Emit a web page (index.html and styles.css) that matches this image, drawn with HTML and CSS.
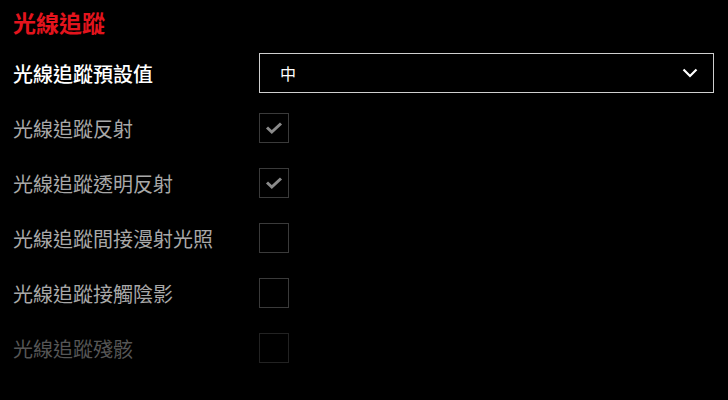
FILE: index.html
```html
<!DOCTYPE html>
<html lang="zh-Hant">
<head>
<meta charset="utf-8">
<link rel="stylesheet" href="styles.css">
</head>
<body>
<div class="panel">
  <h1 class="title">光線追蹤</h1>
  <div class="row">
    <div class="label label-main">光線追蹤預設值</div>
    <div class="select">
      <span class="select-value">中</span>
      <svg class="chevron" width="16" height="10" viewBox="0 0 16 10"><path d="M1.5 1.5 L8 8 L14.5 1.5" fill="none" stroke="#fff" stroke-width="2.2"/></svg>
    </div>
  </div>
  <div class="row">
    <div class="label">光線追蹤反射</div>
    <div class="checkbox"><svg width="18" height="14" viewBox="0 0 18 14"><path d="M2 6.5 L6.8 11 L16 2.5" fill="none" stroke="#8a8a8a" stroke-width="3"/></svg></div>
  </div>
  <div class="row">
    <div class="label">光線追蹤透明反射</div>
    <div class="checkbox"><svg width="18" height="14" viewBox="0 0 18 14"><path d="M2 6.5 L6.8 11 L16 2.5" fill="none" stroke="#8a8a8a" stroke-width="3"/></svg></div>
  </div>
  <div class="row">
    <div class="label">光線追蹤間接漫射光照</div>
    <div class="checkbox"></div>
  </div>
  <div class="row">
    <div class="label">光線追蹤接觸陰影</div>
    <div class="checkbox"></div>
  </div>
  <div class="row">
    <div class="label label-disabled">光線追蹤殘骸</div>
    <div class="checkbox checkbox-disabled"></div>
  </div>
</div>
</body>
</html>
```
FILE: styles.css
```css
html, body {
  margin: 0;
  padding: 0;
  background: #000;
  width: 728px;
  height: 400px;
  overflow: hidden;
}
.panel {
  padding: 0 14px 0 13px;
  font-family: "Noto Sans CJK TC", "Noto Sans", sans-serif;
}
.title {
  margin: 0;
  height: 45px;
  line-height: 45px;
  font-size: 23px;
  font-weight: 700;
  color: #e3141d;
}
.row {
  height: 55px;
  display: grid;
  grid-template-columns: 246px 1fr;
  align-items: center;
}
.label {
  font-size: 20px;
  line-height: 24px;
  padding-top: 3px;
  color: #a8a8a8;
  white-space: nowrap;
}
.label-main {
  color: #fff;
  font-weight: 500;
}
.label-disabled {
  color: #555;
}
.select {
  height: 38px;
  border: 1px solid #cfcfcf;
  display: flex;
  align-items: center;
  justify-content: space-between;
  padding: 0 15px 0 20px;
}
.select-value {
  color: #fff;
  font-size: 16px;
}
.chevron {
  display: block;
}
.checkbox {
  width: 28px;
  height: 28px;
  border: 1px solid #3a3a3a;
  background: #000;
  display: flex;
  align-items: center;
  justify-content: center;
}
.checkbox-disabled {
  border-color: #222;
}
```
